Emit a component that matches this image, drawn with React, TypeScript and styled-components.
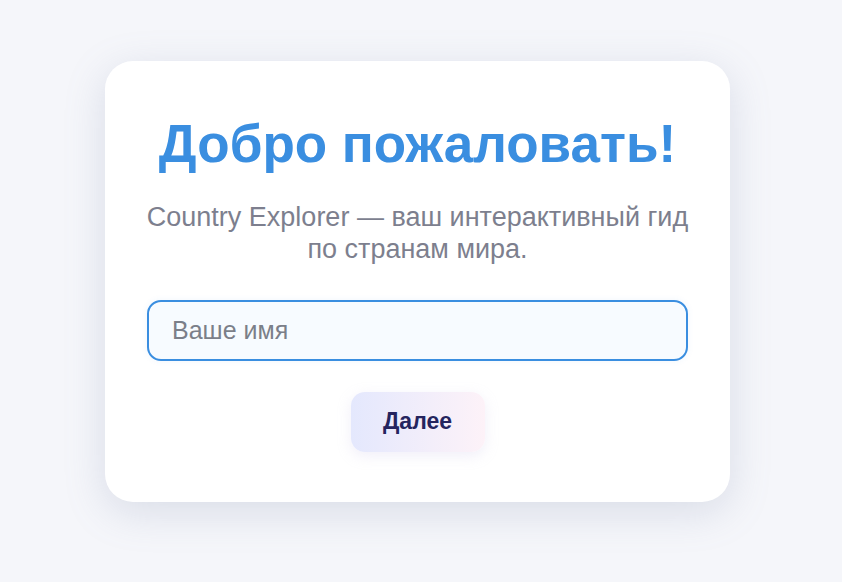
import React from "react";
import styled, { createGlobalStyle } from "styled-components";

const Global = createGlobalStyle`
  html, body { margin: 0; padding: 0; background: #f5f6fa; }
  body { font-family: "Liberation Sans", Arial, sans-serif; }
  * { box-sizing: border-box; }
`;

const Page = styled.div`
  min-height: 582px;
  padding: 61px 0 0 105px;
`;

const Card = styled.div`
  width: 625px;
  height: 441px;
  background: #ffffff;
  border-radius: 28px;
  box-shadow: 0 10px 40px rgba(120, 130, 170, 0.22);
  padding: 52px 42px 50px;
  display: flex;
  flex-direction: column;
  align-items: center;
`;

const Title = styled.h1`
  margin: 0;
  font-size: 53px;
  font-weight: 700;
  color: #3a8ee0;
  line-height: 61px;
  text-align: center;
`;

const Subtitle = styled.p`
  margin: 27px 0 0;
  font-size: 27px;
  line-height: 32.4px;
  color: #7d7f8e;
  text-align: center;
  white-space: nowrap;
`;

const Input = styled.input`
  margin-top: 34px;
  flex: none;
  width: 541px;
  height: 61px;
  border: 2px solid #3a8ee0;
  border-radius: 14px;
  background: #f7fbff;
  padding: 0 23px;
  font-family: "Liberation Sans", Arial, sans-serif;
  font-size: 25px;
  color: #333;
  outline: none;
  box-shadow: 0 0 6px rgba(58, 142, 224, 0.08);
  &::placeholder { color: #7b7f89; }
`;

const Button = styled.button`
  margin-top: 31px;
  flex: none;
  width: 134px;
  height: 60px;
  border: none;
  border-radius: 14px;
  background: linear-gradient(90deg, #e4e8fd 0%, #fdf2f8 100%);
  box-shadow: 0 4px 14px rgba(200, 190, 230, 0.25);
  font-family: "Liberation Sans", Arial, sans-serif;
  font-size: 23px;
  font-weight: 700;
  color: #24245e;
  cursor: pointer;
`;

export default function App() {
  return (
    <>
      <Global />
      <Page>
        <Card>
          <Title>Добро пожаловать!</Title>
          <Subtitle>
            Country Explorer — ваш интерактивный гид
            <br />
            по странам мира.
          </Subtitle>
          <Input placeholder="Ваше имя" autoFocus />
          <Button>Далее</Button>
        </Card>
      </Page>
    </>
  );
}
